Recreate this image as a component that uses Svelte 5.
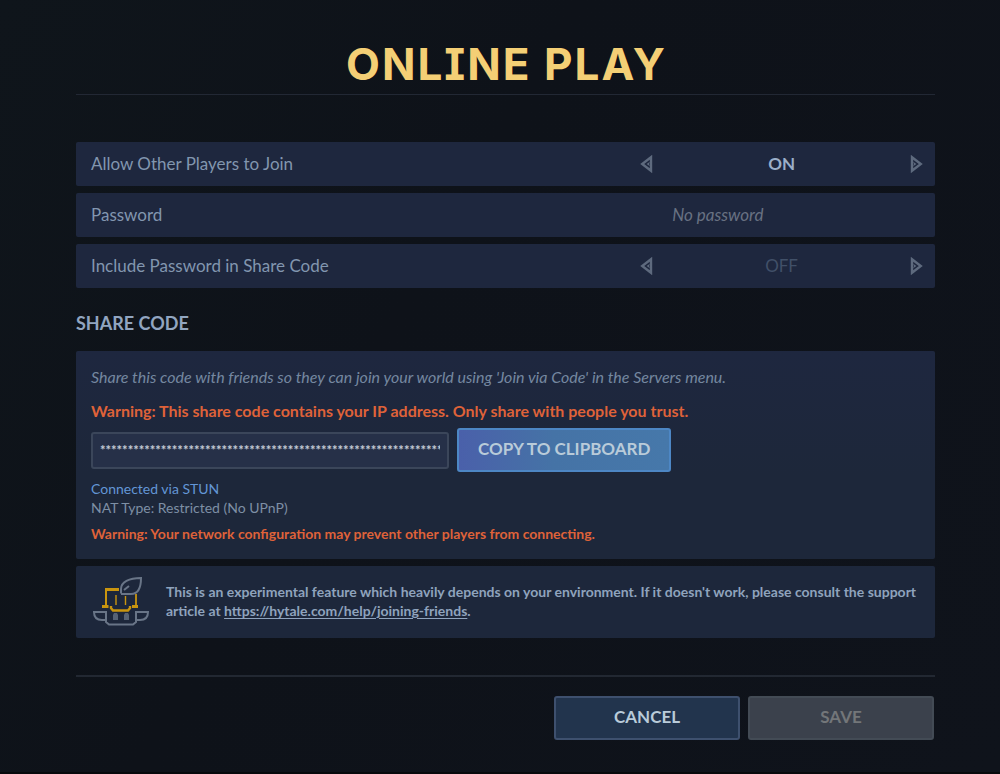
<script>
  let allowJoin = $state(true);
  let includePassword = $state(false);
  let password = $state('');
  const shareCode = '*'.repeat(66);
</script>

{#snippet arrow(dir)}
  <svg width="13" height="18" viewBox="0 0 13 18" aria-hidden="true" class:flip={dir === 'right'}>
    <path d="M11 2.2V15.8L2.2 9Z" fill="none" stroke="#5e6a7e" stroke-width="2.4" />
    <path d="M9.8 6.8L9 9L9.8 11.2L6.6 9Z" fill="#5e6a7e" />
  </svg>
{/snippet}

<main>
  <header><h1>ONLINE PLAY</h1></header>

  <section class="settings">
    <div class="row">
      <span class="label" id="allow">Allow Other Players to Join</span>
      <div class="picker" role="group" aria-labelledby="allow">
        <button class="step" aria-label="Previous" onclick={() => (allowJoin = !allowJoin)}>{@render arrow('left')}</button>
        <span class="value" class:off={!allowJoin}>{allowJoin ? 'ON' : 'OFF'}</span>
        <button class="step" aria-label="Next" onclick={() => (allowJoin = !allowJoin)}>{@render arrow('right')}</button>
      </div>
    </div>
    <div class="row">
      <label class="label" for="password">Password</label>
      <input id="password" class="password" type="text" placeholder="No password" bind:value={password} />
    </div>
    <div class="row">
      <span class="label" id="include">Include Password in Share Code</span>
      <div class="picker" role="group" aria-labelledby="include">
        <button class="step" aria-label="Previous" onclick={() => (includePassword = !includePassword)}>{@render arrow('left')}</button>
        <span class="value" class:off={!includePassword}>{includePassword ? 'ON' : 'OFF'}</span>
        <button class="step" aria-label="Next" onclick={() => (includePassword = !includePassword)}>{@render arrow('right')}</button>
      </div>
    </div>
  </section>

  <h2 id="share">SHARE CODE</h2>

  <section class="share">
    <p class="hint">Share this code with friends so they can join your world using 'Join via Code' in the Servers menu.</p>
    <p class="warning">Warning: This share code contains your IP address. Only share with people you trust.</p>
    <div class="code">
      <input type="text" readonly value={shareCode} aria-labelledby="share" />
      <button class="btn copy">COPY TO CLIPBOARD</button>
    </div>
    <p class="status">Connected via STUN</p>
    <p class="nat">NAT Type: Restricted (No UPnP)</p>
    <p class="warning small">Warning: Your network configuration may prevent other players from connecting.</p>
  </section>

  <aside>
    <svg class="emblem" width="56" height="50" viewBox="0 0 56 50" fill="none" aria-hidden="true">
      <g stroke="#c9950f">
        <path d="M13 30V13.5" stroke-width="2" />
        <path d="M12 13.5H26" stroke-width="3" />
        <path d="M9 30.5H15.5M39 30.5H45" stroke-width="3" />
        <path d="M23 19V29M32.5 20V29" stroke-width="1.4" />
        <path d="M43 18V30" stroke-width="1.8" />
        <path d="M18 30V32L20 34.5H35L37 32V30" stroke-width="2.4" />
      </g>
      <g stroke="#697587" stroke-width="2">
        <path d="M28 17.5V13C28 6 36 2 48 2C48 10 46 18 38 18H28M31 14L36 10" />
        <path d="M1 36H13V44H9C4 44 1 41 1 36ZM55 36H43V44H47C52 44 55 41 55 36ZM13 43V46L16 48.5H40L43 46V43" />
      </g>
      <path d="M21 37H24L25 39V44H20V39ZM32 37H35L36 39V44H31V39Z" fill="#566274" />
    </svg>
    <p>This is an experimental feature which heavily depends on your environment. If it doesn't work, please consult the support article at <a href="https://hytale.com/help/joining-friends">https://hytale.com/help/joining-friends</a>.</p>
  </aside>

  <footer>
    <button class="btn cancel">CANCEL</button>
    <button class="btn save" disabled>SAVE</button>
  </footer>
</main>

<style>
  :global(body) {
    margin: 0;
    background: #0f131a;
  }
  main {
    box-sizing: border-box;
    min-height: 100vh;
    padding: 36px 65px 30px 76px;
    border-bottom: 2px solid #07090c;
    background: linear-gradient(120deg, #0f151b, #0e1219 40%, #0f131b);
    color: #8296af;
    font-family: Lato, "Noto Sans", sans-serif;
  }
  h1, h2, p {
    margin: 0;
  }
  button, input {
    box-sizing: border-box;
    font-family: inherit;
  }
  header {
    padding-bottom: 2px;
    border-bottom: 1px solid #222834;
    text-align: center;
  }
  h1 {
    padding-left: 2px;
    color: #f4cf75;
    font: 700 44px/56px Inter, sans-serif;
    font-feature-settings: "cv08";
    letter-spacing: 2px;
  }
  .settings {
    display: flex;
    flex-direction: column;
    gap: 7px;
    margin-top: 47px;
  }
  .row {
    display: flex;
    align-items: center;
    height: 44px;
    padding: 0 12px 0 15px;
    border-radius: 2px;
    background: #1e273e;
  }
  .label, .value, .password {
    padding-bottom: 2px;
  }
  .label {
    flex: 1;
    font-size: 17px;
  }
  .picker, .password {
    flex: 0 0 34%;
  }
  .picker {
    display: flex;
    align-items: center;
  }
  .step {
    display: flex;
    padding: 0;
    border: 0;
    background: none;
  }
  .flip {
    transform: scaleX(-1);
  }
  .value {
    flex: 1;
    color: #9bafc9;
    font-size: 17px;
    font-weight: 700;
    text-align: center;
  }
  .value.off {
    color: #415068;
    font-weight: 400;
  }
  .password {
    padding: 0 32px 2px;
    border: 0;
    outline: 0;
    background: none;
    color: #9bafc9;
    font-size: 17px;
    min-width: 0;
  }
  .password::placeholder {
    color: #687182;
    font-style: italic;
    opacity: 1;
  }
  h2 {
    margin: 24px 0 17px;
    color: #91a5c0;
    font-size: 18px;
    line-height: 22px;
  }
  .share {
    padding: 15px 15px 15px;
    border-radius: 2px;
    background: linear-gradient(#1e273f, #1d273a 60%);
  }
  .hint {
    color: #7587a0;
    font-size: 16px;
    font-style: italic;
    line-height: 22px;
  }
  .warning {
    margin-top: 13px;
    color: #df6239;
    font-size: 16px;
    font-weight: 700;
    line-height: 20px;
  }
  .code {
    display: flex;
    align-items: center;
    gap: 8px;
    margin: 7px 0;
  }
  .code input {
    width: 358px;
    height: 37px;
    padding: 0 7px;
    border: 2px solid #3b465a;
    border-radius: 3px;
    outline: 0;
    background: #263048;
    color: #c5ccd7;
    font-size: 13px;
    font-weight: 700;
  }
  .btn {
    height: 44px;
    padding: 0 19px 3px;
    border: 2px solid;
    border-radius: 3px;
    font-size: 17px;
    font-weight: 700;
  }
  .copy {
    border-color: #4d87c5;
    background: linear-gradient(90deg, #4a60aa, #4573a6 45%, #4678aa);
    color: #b9cbd9;
  }
  .status, .nat {
    font-size: 14px;
    line-height: 19px;
  }
  .status {
    color: #6396d6;
  }
  .nat {
    color: #7e8fa5;
  }
  .small {
    margin-top: 7px;
    font-size: 14px;
  }
  aside {
    display: flex;
    align-items: center;
    gap: 17px;
    margin-top: 7px;
    padding: 10px 14px 12px 17px;
    border-radius: 2px;
    background: #1d273b;
  }
  .emblem {
    flex: none;
  }
  aside p {
    color: #8fa3bd;
    font-size: 14px;
    font-weight: 700;
    line-height: 19px;
  }
  a {
    color: inherit;
    text-underline-offset: 2px;
  }
  footer {
    display: flex;
    justify-content: flex-end;
    gap: 8px;
    margin-top: 37px;
    padding: 19px 1px 0 0;
    border-top: 2px solid #222832;
  }
  footer .btn {
    width: 186px;
  }
  .cancel {
    border-color: #3e506e;
    background: #22344d;
    color: #b9cbd9;
  }
  .save {
    border-color: #434b55;
    background: #3b414c;
    color: #737679;
  }
</style>
